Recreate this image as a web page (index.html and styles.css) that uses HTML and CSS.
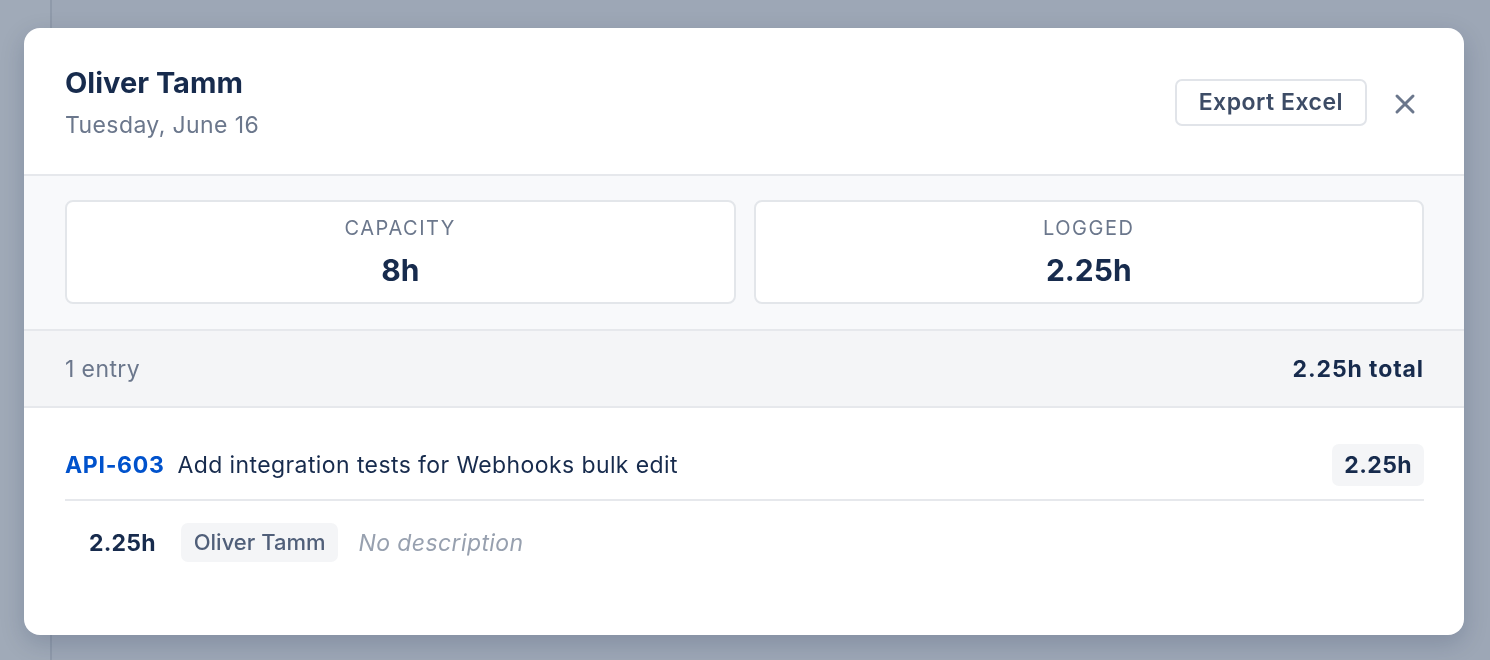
FILE: index.html
```html
<!DOCTYPE html>
<html lang="en">
<head>
  <meta charset="UTF-8" />
  <meta name="viewport" content="width=device-width, initial-scale=1.0"/>
  <title>Oliver Tamm – Tuesday, June 16</title>
  <link rel="stylesheet" href="styles.css">
</head>
<body>
  <div class="backdrop">
    <div class="sidebar-edge"></div>
  </div>

  <div class="modal">
    <header class="modal-header">
      <div>
        <h1 class="modal-title">Oliver Tamm</h1>
        <p class="modal-subtitle">Tuesday, June 16</p>
      </div>
      <div class="header-actions">
        <button class="btn-export">Export Excel</button>
        <button class="btn-close" aria-label="Close">
          <svg width="22" height="22" viewBox="0 0 22 22">
            <path d="M3 3 L19 19 M19 3 L3 19" stroke="#6b778c" stroke-width="3" stroke-linecap="round" fill="none"/>
          </svg>
        </button>
      </div>
    </header>

    <section class="stats">
      <div class="stat-card">
        <div class="stat-label">Capacity</div>
        <div class="stat-value">8h</div>
      </div>
      <div class="stat-card">
        <div class="stat-label">Logged</div>
        <div class="stat-value">2.25h</div>
      </div>
    </section>

    <div class="summary">
      <span class="summary-count">1 entry</span>
      <span class="summary-total">2.25h total</span>
    </div>

    <div class="entries">
      <div class="issue-row">
        <div class="issue-info">
          <a class="issue-key" href="#">API-603</a>
          <span class="issue-summary">Add integration tests for Webhooks bulk edit</span>
        </div>
        <span class="issue-hours">2.25h</span>
      </div>
      <div class="worklog-row">
        <span class="worklog-hours">2.25h</span>
        <span class="worklog-author">Oliver Tamm</span>
        <span class="worklog-desc">No description</span>
      </div>
    </div>
  </div>
</body>
</html>
```

FILE: styles.css
```css
html, body {
  margin: 0;
  height: 100%;
}
body {
  font-family: Inter, "Noto Sans", sans-serif;
  background-color: #9da7b6;
  color: #172b4d;
  overflow: hidden;
}
.backdrop {
  position: fixed;
  inset: 0;
}
.sidebar-edge {
  width: 50px;
  height: 100%;
  border-right: 2px solid #8f9aaa;
  background-color: #a0aab8;
}
.modal {
  position: absolute;
  left: 24px;
  top: 28px;
  width: 1440px;
  height: 607px;
  background-color: #fff;
  border-radius: 16px;
  box-shadow: 0 8px 24px rgba(9, 30, 66, 0.18);
  overflow: hidden;
}
.modal-header {
  display: flex;
  justify-content: space-between;
  align-items: center;
  padding: 37px 39px 35px 41px;
  border-bottom: 2px solid #e6e8ec;
}
.modal-title {
  margin: 0;
  font-size: 29px;
  font-weight: 700;
  line-height: 36px;
}
.modal-subtitle {
  margin: 10px 0 0;
  font-size: 23px;
  line-height: 28px;
  letter-spacing: 0.4px;
  color: #6b778c;
}
.header-actions {
  display: flex;
  align-items: center;
  gap: 18px;
}
.btn-export {
  font-family: inherit;
  font-size: 23px;
  font-weight: 600;
  letter-spacing: 0.5px;
  color: #3d4c66;
  background-color: #fff;
  border: 2px solid #e1e4e9;
  border-radius: 7px;
  height: 47px;
  padding: 0 22px;
  cursor: pointer;
}
.btn-close {
  width: 40px;
  height: 40px;
  display: flex;
  align-items: center;
  justify-content: center;
  background: none;
  border: none;
  padding: 0;
  margin-top: 3px;
  cursor: pointer;
}
.stats {
  display: grid;
  grid-template-columns: 1fr 1fr;
  gap: 18px;
  padding: 24px 40px 25px 41px;
  background-color: #f8f9fb;
  border-bottom: 2px solid #e6e8ec;
}
.stat-card {
  height: 100px;
  background-color: #fff;
  border: 2px solid #e3e6ea;
  border-radius: 8px;
  display: flex;
  flex-direction: column;
  align-items: center;
  justify-content: center;
  gap: 12px;
}
.stat-label {
  font-size: 20px;
  line-height: 24px;
  text-transform: uppercase;
  letter-spacing: 1.5px;
  color: #6b778c;
}
.stat-value {
  font-size: 30px;
  line-height: 36px;
  font-weight: 700;
}
.summary {
  display: flex;
  justify-content: space-between;
  align-items: center;
  height: 75px;
  padding: 0 40px 0 41px;
  background-color: #f4f5f7;
  border-bottom: 2px solid #e6e8ec;
  font-size: 23px;
  letter-spacing: 0.4px;
}
.summary-count {
  color: #6b778c;
}
.summary-total {
  font-weight: 700;
  letter-spacing: 0.9px;
}
.entries {
  padding: 36px 40px 0 41px;
}
.issue-row {
  display: flex;
  justify-content: space-between;
  align-items: center;
  padding-bottom: 13px;
  border-bottom: 2px solid #e6e8ec;
  font-size: 23px;
  letter-spacing: 0.4px;
}
.issue-info {
  display: flex;
  align-items: center;
  gap: 13px;
}
.issue-key {
  color: #0052cc;
  font-weight: 700;
  letter-spacing: 0.7px;
  text-decoration: none;
}
.issue-hours {
  font-weight: 700;
  background-color: #f4f5f7;
  border-radius: 7px;
  height: 42px;
  line-height: 42px;
  padding: 0 12px;
}
.worklog-row {
  display: flex;
  align-items: center;
  padding: 22px 0 0 24px;
  font-size: 22px;
}
.worklog-hours {
  font-size: 23px;
  font-weight: 700;
  letter-spacing: 0.2px;
  margin-right: 25px;
}
.worklog-author {
  color: #505f79;
  font-weight: 500;
  background-color: #f4f5f7;
  border-radius: 7px;
  height: 39px;
  line-height: 39px;
  padding: 0 13px;
  margin-right: 20px;
}
.worklog-desc {
  color: #97a0af;
  font-style: italic;
  font-size: 23px;
  letter-spacing: 0.4px;
}
```
